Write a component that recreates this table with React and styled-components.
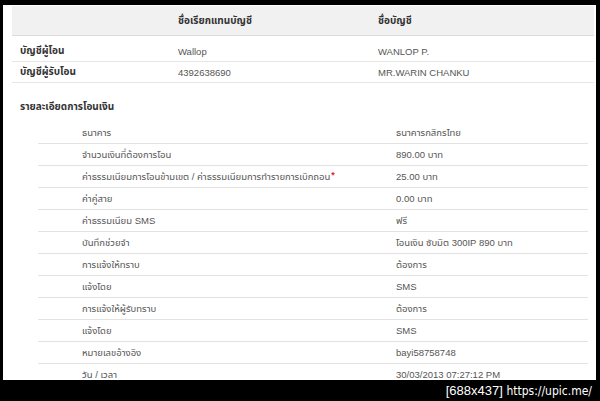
import styled, { createGlobalStyle } from "styled-components";

const GlobalStyle = createGlobalStyle`
  html, body {
    margin: 0;
    padding: 0;
    background: #000;
  }
  body {
    font-family: "Liberation Sans", "Noto Sans Thai", Tahoma, sans-serif;
  }
`;

const accounts = [
  { title: "บัญชีผู้โอน", nick: "Wallop", name: "WANLOP P." },
  { title: "บัญชีผู้รับโอน", nick: "4392638690", name: "MR.WARIN CHANKU" },
];

const details = [
  { label: "ธนาคาร", value: "ธนาคารกสิกรไทย" },
  { label: "จำนวนเงินที่ต้องการโอน", value: "890.00 บาท" },
  { label: "ค่าธรรมเนียมการโอนข้ามเขต / ค่าธรรมเนียมการทำรายการเบิกถอน", value: "25.00 บาท", required: true },
  { label: "ค่าคู่สาย", value: "0.00 บาท" },
  { label: "ค่าธรรมเนียม SMS", value: "ฟรี" },
  { label: "บันทึกช่วยจำ", value: "โอนเงิน ซับมิต 300IP 890 บาท" },
  { label: "การแจ้งให้ทราบ", value: "ต้องการ" },
  { label: "แจ้งโดย", value: "SMS" },
  { label: "การแจ้งให้ผู้รับทราบ", value: "ต้องการ" },
  { label: "แจ้งโดย", value: "SMS" },
  { label: "หมายเลขอ้างอิง", value: "bayi58758748" },
  { label: "วัน / เวลา", value: "30/03/2013 07:27:12 PM" },
];

const App = () => {
  return (
    <Frame>
      <GlobalStyle />
      <Panel>
        <AccountTable>
          <HeaderRow>
            <Cell />
            <HeadCell>ชื่อเรียกแทนบัญชี</HeadCell>
            <HeadCell>ชื่อบัญชี</HeadCell>
          </HeaderRow>
          <AccountBody>
            {accounts.map((a) => (
              <AccountRow key={a.title}>
                <TitleCell>{a.title}</TitleCell>
                <Cell>{a.nick}</Cell>
                <Cell>{a.name}</Cell>
              </AccountRow>
            ))}
          </AccountBody>
        </AccountTable>

        <SectionTitle>รายละเอียดการโอนเงิน</SectionTitle>

        <DetailList>
          {details.map((d, i) => (
            <DetailRow key={i}>
              <DetailLabel>
                {d.label}
                {d.required && <Star>*</Star>}
              </DetailLabel>
              <DetailValue>{d.value}</DetailValue>
            </DetailRow>
          ))}
        </DetailList>
      </Panel>
      <Footer>
        [688x437] <FooterLink>https://upic.me/</FooterLink>
      </Footer>
    </Frame>
  );
};

const Frame = styled.div`
  width: 600px;
  height: 401px;
  background: #000;
  padding: 5px 4px 0 3px;
  box-sizing: border-box;
  display: flex;
  flex-direction: column;
`;

const Panel = styled.div`
  height: 375px;
  flex-shrink: 0;
  background: #fff;
  overflow: hidden;
  padding-top: 1px;
  box-sizing: border-box;
`;

const AccountTable = styled.div`
  margin: 0 2px 0 9px;
`;

const HeaderRow = styled.div`
  display: grid;
  grid-template-columns: 166px 200px 1fr;
  height: 29px;
  align-items: center;
  background: #f1f1f1;
  border-bottom: 1px solid #dcdcdc;
`;

const AccountBody = styled.div`
  padding-top: 5px;
`;

const AccountRow = styled.div`
  display: grid;
  grid-template-columns: 166px 200px 1fr;
  height: 20px;
  align-items: center;
  border-bottom: 1px solid #e6e6e6;
`;

const Cell = styled.div`
  font-size: 9.5px;
  color: #555;
  white-space: nowrap;
`;

const HeadCell = styled(Cell)`
  font-weight: bold;
  color: #333;
  font-size: 10px;
`;

const TitleCell = styled(Cell)`
  font-weight: bold;
  color: #333;
  font-size: 10px;
  padding-left: 8px;
`;

const SectionTitle = styled.div`
  margin-top: 16px;
  padding-left: 17px;
  line-height: 16px;
  font-size: 10px;
  font-weight: bold;
  color: #333;
`;

const DetailList = styled.div`
  margin: 7px 8px 0 35px;
`;

const DetailRow = styled.div`
  display: grid;
  grid-template-columns: 358px 1fr;
  height: 21px;
  align-items: center;
  border-bottom: 1px solid #e2e2e2;
`;

const DetailLabel = styled.div`
  padding-left: 44px;
  font-size: 9.5px;
  color: #555;
  white-space: nowrap;
`;

const DetailValue = styled.div`
  font-size: 9.5px;
  color: #555;
  white-space: nowrap;
`;

const Star = styled.span`
  color: #f01818;
  font-size: 9px;
  font-weight: bold;
  vertical-align: top;
  margin-left: 1px;
`;

const Footer = styled.div`
  height: 21px;
  color: #fff;
  font-family: "Liberation Sans", sans-serif;
  font-size: 13px;
  line-height: 21px;
  text-align: right;
  padding-right: 4px;
  white-space: nowrap;
`;

const FooterLink = styled.span`
  font-family: "DejaVu Sans Condensed", "DejaVu Sans", sans-serif;
  font-size: 12px;
`;

export default App;
